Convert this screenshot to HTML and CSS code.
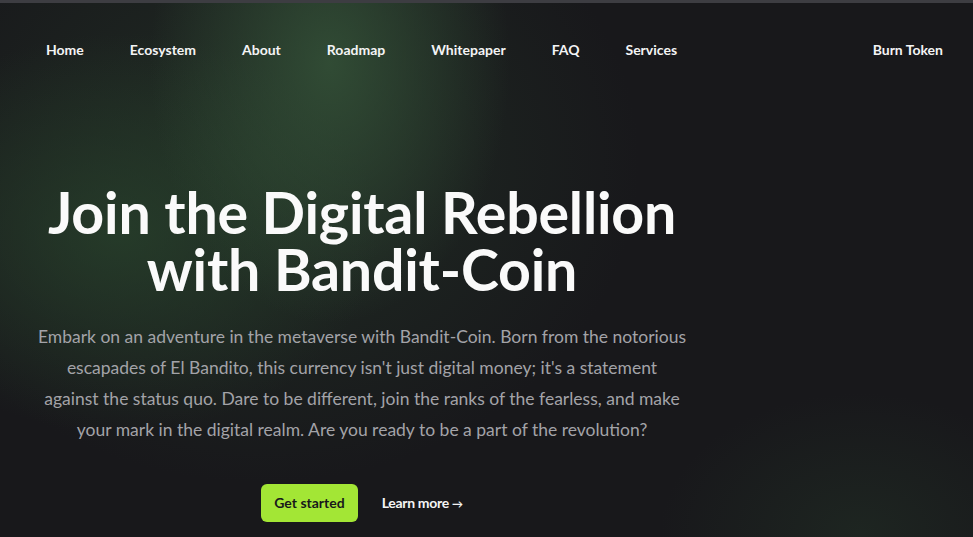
FILE: index.html
```html
<!DOCTYPE html>
<html lang="en">
<head>
<meta charset="utf-8">
<title>Bandit-Coin</title>
<link rel="stylesheet" href="styles.css">
</head>
<body>
<div class="page">
  <header class="header">
    <nav class="nav">
      <div class="nav-links">
        <a href="#" class="nav-link">Home</a>
        <a href="#" class="nav-link">Ecosystem</a>
        <a href="#" class="nav-link">About</a>
        <a href="#" class="nav-link">Roadmap</a>
        <a href="#" class="nav-link">Whitepaper</a>
        <a href="#" class="nav-link">FAQ</a>
        <a href="#" class="nav-link">Services</a>
      </div>
      <a href="#" class="nav-link">Burn Token</a>
    </nav>
  </header>
  <main class="hero">
    <div class="hero-content">
      <h1 class="hero-title">Join the Digital Rebellion with Bandit-Coin</h1>
      <p class="hero-text">Embark on an adventure in the metaverse with Bandit-Coin. Born from the notorious<br>escapades of El Bandito, this currency isn't just digital money; it's a statement<br>against the status quo. Dare to be different, join the ranks of the fearless, and make<br>your mark in the digital realm. Are you ready to be a part of the revolution?</p>
      <div class="hero-actions">
        <a href="#" class="btn-primary">Get started</a>
        <a href="#" class="btn-link">Learn more <span class="arrow">→</span></a>
      </div>
    </div>
  </main>
</div>
</body>
</html>
```
FILE: styles.css
```css
* { box-sizing: border-box; }
html, body {
  margin: 0;
  padding: 0;
  height: 100%;
}
body {
  font-family: Lato, "Noto Sans", sans-serif;
  background: #18181b;
  color: #f4f4f5;
  overflow: hidden;
}
a { text-decoration: none; color: inherit; }

.page {
  position: relative;
  min-height: 537px;
  border-top: 3px solid #3d3d42;
  background:
    radial-gradient(ellipse 180px 260px at 330px 60px, rgba(52, 82, 56, 0.85), rgba(52, 82, 56, 0) 100%),
    radial-gradient(ellipse 260px 200px at 120px 230px, rgba(40, 66, 44, 0.75), rgba(40, 66, 44, 0) 100%),
    radial-gradient(ellipse 380px 320px at 260px 160px, rgba(40, 62, 44, 0.55), rgba(40, 62, 44, 0) 100%),
    radial-gradient(ellipse 200px 140px at 860px 530px, rgba(40, 62, 44, 0.35), rgba(40, 62, 44, 0) 100%),
    #18181b;
}

.nav {
  height: 94px;
  display: flex;
  align-items: center;
  justify-content: space-between;
  padding: 0 30px 0 46px;
}
.nav-links {
  display: flex;
  gap: 46px;
}
.nav-link {
  font-size: 14px;
  font-weight: 700;
  color: #f4f4f5;
  line-height: 20px;
}

.hero {
  padding-left: 26px;
}
.hero-content {
  width: 672px;
  display: flex;
  flex-direction: column;
  align-items: center;
  text-align: center;
  padding-top: 86px;
}
.hero-title {
  margin: 0;
  font-size: 57.3px;
  line-height: 57px;
  font-weight: 700;
  color: #fafafa;
  letter-spacing: -0.2px;
}
.hero-text {
  margin: 24px 0 0;
  font-size: 17.5px;
  line-height: 31px;
  color: #a3a3a8;
  white-space: nowrap;
}
.hero-actions {
  margin-top: 39px;
  display: flex;
  justify-content: center;
  align-items: center;
  gap: 24px;
}
.btn-primary {
  background: #a3e635;
  color: #18181b;
  font-size: 14px;
  font-weight: 700;
  line-height: 20px;
  padding: 9px 13px;
  border-radius: 6px;
}
.btn-link {
  font-size: 14px;
  font-weight: 700;
  line-height: 20px;
  color: #f4f4f5;
  letter-spacing: -0.3px;
}
.arrow { font-size: 11px; }
```
